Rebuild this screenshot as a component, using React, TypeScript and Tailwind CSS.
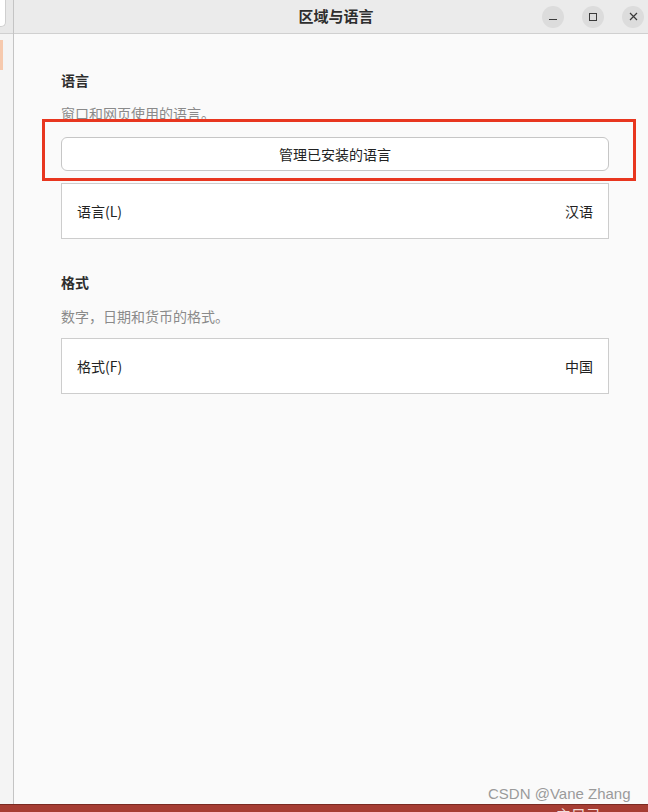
const font = { fontFamily: '"Noto Sans CJK SC", "Noto Sans", sans-serif' }

function WinButton({ kind }: { kind: 'min' | 'max' | 'close' }) {
  return (
    <div className="flex h-[22px] w-[22px] items-center justify-center rounded-full bg-[#dcdcdc]">
      {kind === 'min' && <div className="mt-[5px] h-[1px] w-[8px] bg-[#3a3a3a]" />}
      {kind === 'max' && <div className="h-[8px] w-[8px] border border-[#3a3a3a]" />}
      {kind === 'close' && (
        <svg width="9" height="9" viewBox="0 0 9 9">
          <path d="M1 1L8 8M8 1L1 8" stroke="#3a3a3a" strokeWidth="1.2" />
        </svg>
      )}
    </div>
  )
}

function Row({ label, value }: { label: string; value: string }) {
  return (
    <div className="mt-[12px] flex h-[56px] items-center justify-between border border-[#cdcdcd] bg-white px-[15px] text-[14px] text-[#222]">
      <span>{label}</span>
      <span>{value}</span>
    </div>
  )
}

export default function App() {
  return (
    <div className="relative flex h-[812px] w-[648px] flex-col overflow-hidden bg-[#fafafa]" style={font}>
      <div className="flex flex-1">
        {/* sidebar edge */}
        <div className="flex w-[14px] flex-col border-r border-[#c4c4c4] bg-[#f4f4f4]">
          <div className="h-[34px] border-b border-[#d0d0d0] bg-[#e8e8e8] pr-[8px]">
            <div className="h-[27px] w-[6px] rounded-br-[5px] border-b border-r border-[#cfcfcf] bg-white" />
          </div>
          <div className="mt-[6px] h-[30px] w-[3px] bg-[#f6c9ad]" />
        </div>

        <div className="flex flex-1 flex-col">
          {/* header */}
          <div className="flex h-[34px] items-center border-b border-[#d0d0d0] bg-[#ebebeb] pr-[4px]">
            <div className="flex-1 pl-[116px] text-center text-[15px] font-bold text-[#2e2e2e]">区域与语言</div>
            <div className="flex items-center gap-[18px]">
              <WinButton kind="min" />
              <WinButton kind="max" />
              <WinButton kind="close" />
            </div>
          </div>

          {/* content */}
          <div className="flex-1 pl-[47px] pr-[39px] pt-[36px]">
            <div className="text-[14px] font-bold leading-[20px] text-[#2e2e2e]">语言</div>
            <div className="mt-[13px] text-[14px] leading-[20px] text-[#8a8a8a]">窗口和网页使用的语言。</div>
            <div className="mt-[14px] flex h-[34px] items-center justify-center rounded-[6px] border border-[#c6c6c6] bg-white text-[14px] text-[#222]">
              管理已安装的语言
            </div>
            <Row label="语言(L)" value="汉语" />

            <div className="mt-[33px] text-[14px] font-bold leading-[20px] text-[#2e2e2e]">格式</div>
            <div className="mt-[14px] text-[14px] leading-[20px] text-[#8a8a8a]">数字，日期和货币的格式。</div>
            <div className="mt-[2px]">
              <Row label="格式(F)" value="中国" />
            </div>
          </div>
        </div>
      </div>

      {/* bottom panel edge */}
      <div className="h-[8px] overflow-hidden border-t border-[#7a2a22] bg-[#a63d33]">
        <div className="ml-[556px] mt-[1px] text-[15px] leading-[18px] text-[#f2dcd8]">主目录</div>
      </div>

      {/* highlight box */}
      <div className="absolute left-[42px] top-[119px] h-[62px] w-[594px] border-[3px] border-[#e8361f]" />

      {/* watermark */}
      <div
        className="absolute left-[488px] top-[784px] text-[15px] leading-[20px] text-[#9a9a9a]"
        style={{ fontFamily: '"Liberation Sans", sans-serif' }}
      >
        CSDN @Vane Zhang
      </div>
    </div>
  )
}
